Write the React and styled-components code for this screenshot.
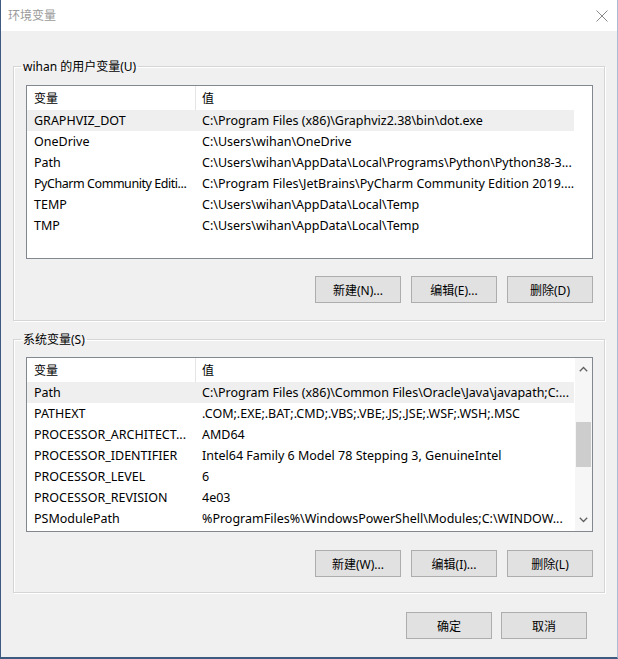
import React from 'react';
import styled, { createGlobalStyle } from 'styled-components';

const GlobalStyle = createGlobalStyle`
  html, body {
    margin: 0;
    padding: 0;
    background: #f0f0f0;
  }
  body {
    font-family: "Noto Sans", "Noto Sans CJK SC", sans-serif;
    font-size: 12px;
    color: #000;
  }
`;

const userVars = [
  ['GRAPHVIZ_DOT', 'C:\\Program Files (x86)\\Graphviz2.38\\bin\\dot.exe'],
  ['OneDrive', 'C:\\Users\\wihan\\OneDrive'],
  ['Path', 'C:\\Users\\wihan\\AppData\\Local\\Programs\\Python\\Python38-3...'],
  ['PyCharm Community Editi...', 'C:\\Program Files\\JetBrains\\PyCharm Community Edition 2019....', true],
  ['TEMP', 'C:\\Users\\wihan\\AppData\\Local\\Temp'],
  ['TMP', 'C:\\Users\\wihan\\AppData\\Local\\Temp'],
];

const sysVars = [
  ['Path', 'C:\\Program Files (x86)\\Common Files\\Oracle\\Java\\javapath;C:...'],
  ['PATHEXT', '.COM;.EXE;.BAT;.CMD;.VBS;.VBE;.JS;.JSE;.WSF;.WSH;.MSC'],
  ['PROCESSOR_ARCHITECT...', 'AMD64'],
  ['PROCESSOR_IDENTIFIER', 'Intel64 Family 6 Model 78 Stepping 3, GenuineIntel'],
  ['PROCESSOR_LEVEL', '6'],
  ['PROCESSOR_REVISION', '4e03'],
  ['PSModulePath', '%ProgramFiles%\\WindowsPowerShell\\Modules;C:\\WINDOW...'],
];

const Window = styled.div`
  width: 618px;
  height: 659px;
  box-sizing: border-box;
  background: #f0f0f0;
  border-left: 1px solid #3d5b7e;
  border-right: 1px solid #a9bcd2;
  border-bottom: 2px solid #3d5b7e;
  display: flex;
  flex-direction: column;
  overflow: hidden;
`;

const TitleBar = styled.div`
  height: 31px;
  flex: none;
  background: #fff;
  display: flex;
  align-items: center;
  justify-content: space-between;
  padding: 0 9px 0 7px;
`;

const Title = styled.span`
  font-size: 12px;
  color: #9a9a9a;
  line-height: 16px;
`;

const Body = styled.div`
  flex: 1;
  display: flex;
  flex-direction: column;
  padding: 27px 12px 0 12px;
`;

const Group = styled.fieldset`
  margin: ${p => p.$top || 0}px 0 0 0;
  padding: ${p => p.$padTop}px 11px ${p => p.$padBottom}px 12px;
  border: 1px solid #d5d5d5;
  box-shadow: inset 1px 1px 0 #fff, 1px 1px 0 #fff;
  min-width: 0;
  display: flex;
  flex-direction: column;
`;

const Legend = styled.legend`
  display: block;
  width: max-content;
  padding: 0 2px;
  margin: 0 0 0 -5px;
  line-height: 17px;
  font-size: 12px;
`;

const ListView = styled.div`
  height: ${p => p.$height}px;
  box-sizing: border-box;
  border: 1px solid #828790;
  background: #fff;
  display: flex;
  overflow: hidden;
`;

const Table = styled.div`
  width: 547px;
  flex: none;
  font-size: 12.5px;
`;

const Columns = styled.div`
  display: grid;
  grid-template-columns: 169px 1fr;
  height: ${p => p.$h}px;
  align-items: center;
  background: ${p => (p.$active ? '#efefef' : 'transparent')};
  white-space: nowrap;
  overflow: hidden;
`;

const HeadCell = styled.div`
  height: 100%;
  display: flex;
  align-items: center;
  padding-left: ${p => p.$pad}px;
  font-size: 12px;
  border-right: ${p => (p.$divider ? '1px solid #e5e5e5' : 'none')};
`;

const Cell = styled.div`
  padding-left: ${p => p.$pad}px;
  overflow: hidden;
  letter-spacing: ${p => (p.$squeeze ? '-0.45px' : 'normal')};
`;

const ScrollBar = styled.div`
  width: 17px;
  flex: none;
  margin-left: auto;
  background: #f6f6f6;
  display: flex;
  flex-direction: column;
  align-items: center;
`;

const Arrow = styled.div`
  height: 22px;
  display: flex;
  align-items: center;
  justify-content: center;
`;

const Track = styled.div`
  flex: 1;
  width: 100%;
  display: flex;
  flex-direction: column;
  align-items: center;
`;

const Thumb = styled.div`
  width: 15px;
  height: 45px;
  margin-top: ${p => p.$offset}px;
  background: #cdcdcd;
`;

const ButtonRow = styled.div`
  display: flex;
  justify-content: flex-end;
  gap: ${p => p.$gap || 10}px;
  margin-top: ${p => p.$top}px;
  padding-right: ${p => p.$right || 0}px;
`;

const Button = styled.button`
  width: 86px;
  height: 27px;
  box-sizing: border-box;
  border: 1px solid #adadad;
  background: #e1e1e1;
  font-family: "Noto Sans", "Noto Sans CJK SC", sans-serif;
  font-size: 12px;
  color: #000;
  padding: 0;
`;

const Chevron = ({ up }) => (
  <svg width="9" height="6" viewBox="0 0 9 6">
    <path
      d={up ? 'M0.8 5.2 L4.5 1.5 L8.2 5.2' : 'M0.8 0.8 L4.5 4.5 L8.2 0.8'}
      fill="none"
      stroke="#606060"
      strokeWidth="1.3"
    />
  </svg>
);

const CloseIcon = () => (
  <svg width="12" height="12" viewBox="0 0 12 12">
    <path d="M0.5 0.5 L11.5 11.5 M11.5 0.5 L0.5 11.5" stroke="#8a8a8a" strokeWidth="1" />
  </svg>
);

const VarList = ({ rows, height, activeRow, scroll }) => (
  <ListView $height={height}>
    <Table>
      <Columns $h={24}>
        <HeadCell $pad={7} $divider>变量</HeadCell>
        <HeadCell $pad={6}>值</HeadCell>
      </Columns>
      {rows.map(([name, value, squeeze], i) => (
        <Columns key={name} $h={21} $active={i === activeRow}>
          <Cell $pad={7} $squeeze={squeeze}>{name}</Cell>
          <Cell $pad={6}>{value}</Cell>
        </Columns>
      ))}
    </Table>
    {scroll && (
      <ScrollBar>
        <Arrow><Chevron up /></Arrow>
        <Track><Thumb $offset={42} /></Track>
        <Arrow><Chevron /></Arrow>
      </ScrollBar>
    )}
  </ListView>
);

export default function App() {
  return (
    <>
      <GlobalStyle />
      <Window>
        <TitleBar>
          <Title>环境变量</Title>
          <CloseIcon />
        </TitleBar>
        <Body>
          <Group $padTop={10} $padBottom={17}>
            <Legend>wihan 的用户变量(U)</Legend>
            <VarList rows={userVars} height={174} activeRow={0} />
            <ButtonRow $top={17}>
              <Button>新建(N)...</Button>
              <Button>编辑(E)...</Button>
              <Button>删除(D)</Button>
            </ButtonRow>
          </Group>
          <Group $top={10} $padTop={9} $padBottom={15}>
            <Legend>系统变量(S)</Legend>
            <VarList rows={sysVars} height={175} activeRow={0} scroll />
            <ButtonRow $top={18}>
              <Button>新建(W)...</Button>
              <Button>编辑(I)...</Button>
              <Button>删除(L)</Button>
            </ButtonRow>
          </Group>
          <ButtonRow $top={19} $gap={9} $right={18}>
            <Button>确定</Button>
            <Button>取消</Button>
          </ButtonRow>
        </Body>
      </Window>
    </>
  );
}
